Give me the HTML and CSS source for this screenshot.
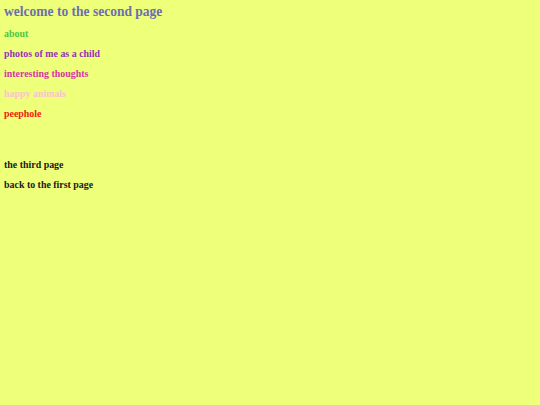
FILE: index.html
```html
<!DOCTYPE html>
<html>
<head>
<meta charset="utf-8">
<link rel="stylesheet" href="styles.css">
</head>
<body>
<div class="page">
  <h1 class="title">welcome to the second page</h1>
  <nav class="links">
    <a class="link about" href="#">about</a>
    <a class="link photos" href="#">photos of me as a child</a>
    <a class="link thoughts" href="#">interesting thoughts</a>
    <a class="link animals" href="#">happy animals</a>
    <a class="link peephole" href="#">peephole</a>
  </nav>
  <nav class="links nav-pages">
    <a class="link plain" href="#">the third page</a>
    <a class="link plain" href="#">back to the first page</a>
  </nav>
</div>
</body>
</html>
```
FILE: styles.css
```css
html, body {
  margin: 0;
  padding: 0;
  background: #eeff7a;
}
.page {
  padding: 2px 4px 0 4.5px;
  font-family: "Liberation Serif", "Times New Roman", serif;
  font-weight: bold;
  display: flex;
  flex-direction: column;
  align-items: flex-start;
  transform: scaleX(0.9);
  transform-origin: 0 0;
}
.title {
  margin: 0;
  font-size: 15px;
  line-height: 18px;
  color: #6b6fb0;
}
.links {
  display: flex;
  flex-direction: column;
  align-items: flex-start;
  margin-top: 3px;
}
.nav-pages {
  margin-top: 31px;
}
.link {
  font-size: 11px;
  line-height: 20px;
  text-decoration: none;
}
.about { color: #4ec63a; }
.photos { color: #9434b4; }
.thoughts { color: #d536a4; }
.animals { color: #f9c3cc; }
.peephole { color: #f2180c; }
.plain { color: #1a1a1a; }
```
